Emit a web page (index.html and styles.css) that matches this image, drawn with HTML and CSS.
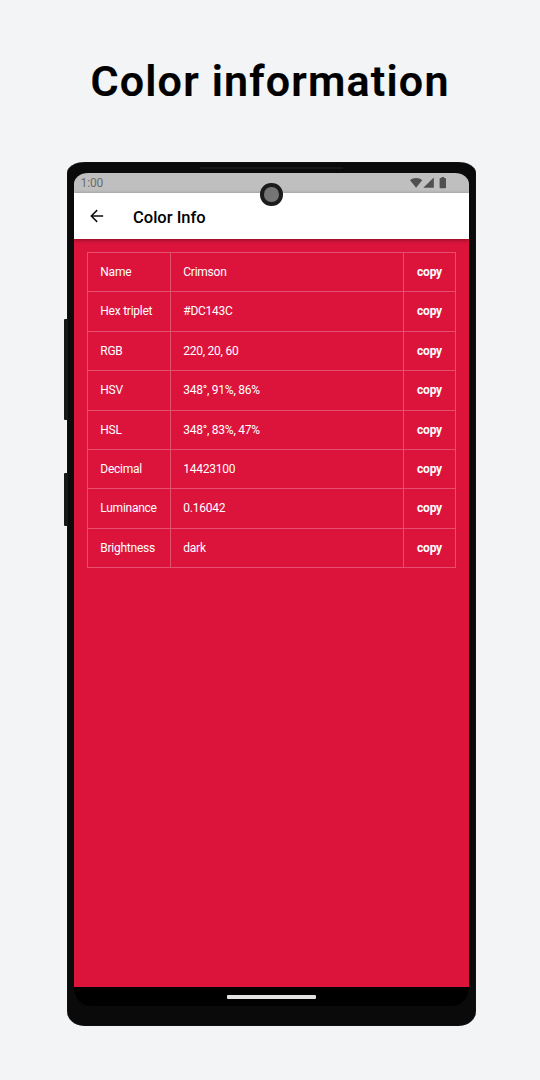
FILE: index.html
```html
<!DOCTYPE html>
<html lang="en">
<head>
<meta charset="utf-8">
<title>Color information</title>
<link rel="stylesheet" href="styles.css">
</head>
<body>
<h1 class="headline"><span>Color information</span></h1>
<main class="phone">
  <i class="speaker"></i>
  <i class="side-key volume"></i>
  <i class="side-key power"></i>
  <i class="camera"></i>
  <div class="screen">
    <div class="status">
      <span class="time">1:00</span>
      <svg class="status-icons" width="38" height="12" viewBox="0 0 38 12" fill="#505050">
        <path d="M0 3.2C3.3.3 9 .3 12.2 3.2L6.1 10.8z"/>
        <path d="M13.3 10.8 23.8.6V10.8z"/>
        <path d="M31.5 0h2.6v1.1H35q1 0 1 1v8.1q0 1-1 1h-4.4q-1 0-1-1V2.100q0-1 1-1h.9z"/>
      </svg>
    </div>
    <header class="app-bar">
      <svg class="back" width="14" height="14" viewBox="0 0 14 14" fill="none" stroke="#111" stroke-width="1.5">
        <path d="M13.200 7H1.700M7.200 1.100 1.300 7l5.900 5.900"/>
      </svg>
      <h2 class="app-title">Color Info</h2>
    </header>
    <section class="content">
      <div class="info">
        <div class="row"><span>Name</span><span>Crimson</span><b>copy</b></div>
        <div class="row"><span>Hex triplet</span><span>#DC143C</span><b>copy</b></div>
        <div class="row"><span>RGB</span><span>220, 20, 60</span><b>copy</b></div>
        <div class="row"><span>HSV</span><span>348°, 91%, 86%</span><b>copy</b></div>
        <div class="row"><span>HSL</span><span>348°, 83%, 47%</span><b>copy</b></div>
        <div class="row"><span>Decimal</span><span>14423100</span><b>copy</b></div>
        <div class="row"><span>Luminance</span><span>0.16042</span><b>copy</b></div>
        <div class="row"><span>Brightness</span><span>dark</span><b>copy</b></div>
      </div>
    </section>
    <footer class="nav-bar"><i class="handle"></i></footer>
  </div>
</main>
</body>
</html>
```
FILE: styles.css
```css
* { box-sizing: border-box; }
body {
  margin: 0;
  height: 1080px;
  overflow: hidden;
  background: #f3f4f6;
  font-family: Roboto, "Liberation Sans", sans-serif;
}
.headline {
  height: 162px;
  margin: 0;
  display: flex;
  justify-content: center;
  color: #000;
  font-size: 43px;
  font-weight: 600;
  line-height: 162px;
  letter-spacing: 1.2px;
  white-space: nowrap;
  -webkit-text-stroke: .2px #000;
}
.phone {
  position: relative;
  width: 409px;
  height: 864px;
  margin-left: 67px;
  padding: 11px 7px 20px;
  border-radius: 18px 18px 17px 17px / 11px 11px 15px 15px;
  background: #0a0a0a;
  box-shadow: inset 0 0 1px #444;
}
.speaker {
  position: absolute;
  left: 133px;
  top: 5px;
  width: 143px;
  height: 2px;
  background: #171717;
}
.side-key {
  position: absolute;
  left: -3px;
  width: 4px;
  border-radius: 1px 0 0 1px;
  background: #15191a;
}
.volume { top: 157px; height: 101px; }
.power { top: 311px; height: 53px; }
.camera {
  position: absolute;
  z-index: 2;
  left: 193px;
  top: 21px;
  width: 22.5px;
  height: 22.5px;
  border: 4px solid #1c1c1c;
  border-radius: 50%;
  background: #757575;
}
.screen {
  width: 395px;
  height: 833px;
  display: flex;
  flex-direction: column;
  overflow: hidden;
  border-radius: 14px 14px 17px 17px / 11px 11px 18px 18px;
  background: #000;
}
.status {
  flex: none;
  height: 20px;
  padding: 0 21px 0 6.5px;
  display: flex;
  justify-content: space-between;
  align-items: center;
  background: #bfbfbf;
}
.time {
  color: #6c6c6c;
  font-size: 12px;
  line-height: 21px;
  padding-top: 1px;
  letter-spacing: -.1px;
}
.app-bar {
  position: relative;
  flex: none;
  height: 46px;
  padding-left: 16px;
  display: flex;
  align-items: center;
  background: #fff;
  box-shadow: 0 1px 4px rgba(0, 0, 0, .4);
}
.app-title {
  margin: 2px 0 0 29px;
  color: #000;
  font-size: 16.5px;
  font-weight: 500;
}
.content {
  flex: 1;
  padding: 13px 13px 0;
  background: #dc143c;
}
.info {
  width: 369px;
  border: solid rgba(255, 255, 255, .26);
  border-width: 1px 1px 0;
}
.row {
  height: 39.42px;
  display: grid;
  grid-template-columns: 83px 233px 1fr;
  border-bottom: 1px solid rgba(255, 255, 255, .26);
  color: #fff;
  font-size: 12px;
  line-height: 39.3px;
  letter-spacing: -.25px;
}
.row span {
  height: 38.42px;
  padding-left: 12.3px;
  border-right: 1px solid rgba(255, 255, 255, .26);
}
.row b {
  height: 38.42px;
  font-weight: 700;
  text-align: center;
}
.nav-bar {
  height: 19px;
  display: flex;
  justify-content: center;
  align-items: center;
}
.handle {
  width: 89px;
  height: 4px;
  border-radius: 1px;
  background: #e2e2e2;
}
```
